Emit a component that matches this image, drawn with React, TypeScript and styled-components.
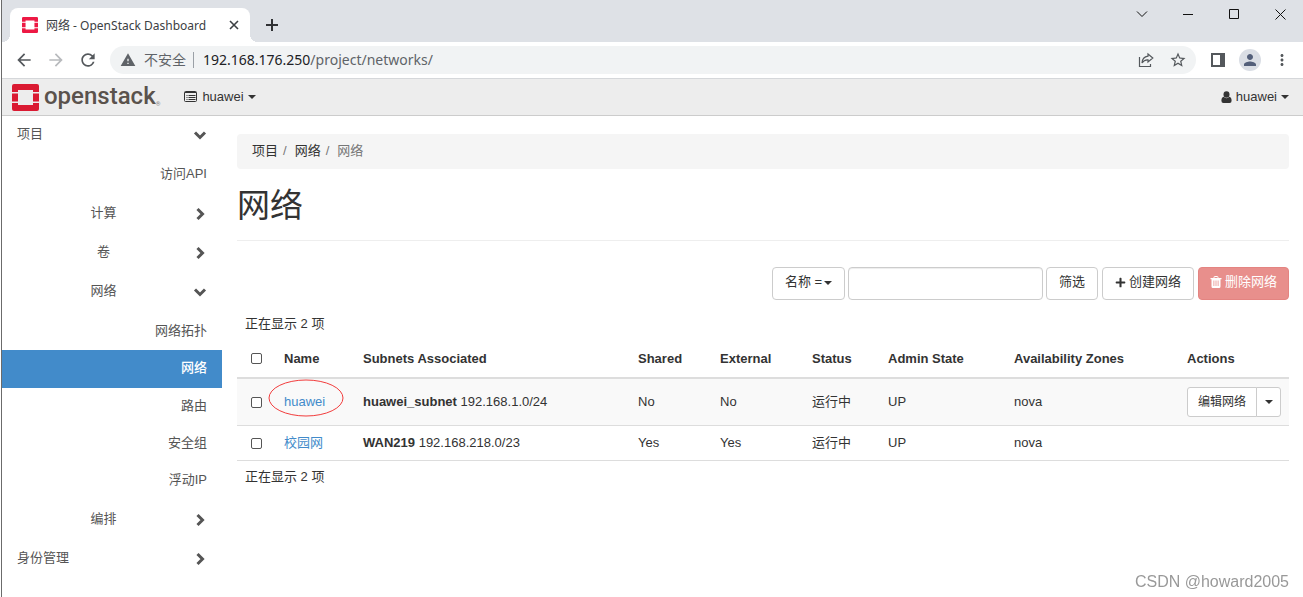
import React from "react";
import styled, { createGlobalStyle, css } from "styled-components";
import {
  MdArrowBack,
  MdArrowForward,
  MdRefresh,
  MdWarning,
  MdStarBorder,
  MdPerson,
  MdMoreVert,
} from "react-icons/md";
import { FaPlus } from "react-icons/fa";

const uiFont = `"Noto Sans", "Noto Sans CJK SC", sans-serif`;
const pageFont = `"Liberation Sans", "Noto Sans CJK SC", sans-serif`;

const GlobalStyle = createGlobalStyle`
  *, *::before, *::after { box-sizing: border-box; }
  body {
    margin: 0;
    background: #fff;
    color: #333;
    font: 13px/20px ${pageFont};
  }
  button, input, select { font: inherit; color: inherit; margin: 0; }
  a { color: inherit; text-decoration: none; }
  svg { display: block; flex: none; }
`;

const Window = styled.div`
  min-height: 100vh;
  margin-left: 1px;
  border-left: 1px solid #6b6b6b;
`;

/* ---------- browser chrome ---------- */

const TabStrip = styled.div`
  display: flex;
  align-items: flex-end;
  height: 42px;
  padding-left: 8px;
  background: #dee1e6;
`;

const Tab = styled.div`
  position: relative;
  display: flex;
  align-items: center;
  width: 240px;
  height: 34px;
  padding: 0 10px 0 12px;
  border-radius: 8px 8px 0 0;
  background: #fff;
  font: 12px/18px ${uiFont};
  color: #3c4043;

  &::before,
  &::after {
    content: "";
    position: absolute;
    bottom: 0;
    width: 8px;
    height: 8px;
  }
  &::before {
    right: 100%;
    background: radial-gradient(circle at 0 0, transparent 8px, #fff 8px);
  }
  &::after {
    left: 100%;
    background: radial-gradient(circle at 100% 0, transparent 8px, #fff 8px);
  }
`;

const TabTitle = styled.span`
  flex: 1;
  margin-left: 8px;
  padding-top: 2px;
  white-space: nowrap;
`;

const IconButton = styled.button<{ $size?: number }>`
  display: flex;
  align-items: center;
  justify-content: center;
  flex: none;
  width: ${(p) => p.$size ?? 32}px;
  height: ${(p) => p.$size ?? 32}px;
  padding: 0;
  border: 0;
  background: none;
  color: #54585c;
`;

const NewTab = styled(IconButton)`
  margin: 0 auto 1px 6px;
  color: #303134;
`;

const WindowControls = styled.div`
  display: flex;
  align-self: flex-start;
`;

const WindowButton = styled(IconButton)`
  width: 46px;
  height: 28px;
  color: #111;
`;

const Toolbar = styled.div`
  display: flex;
  align-items: center;
  height: 37px;
  padding: 0 5px 1px 6px;
  border-bottom: 1px solid #d5d7da;
`;

const Omnibox = styled.form`
  flex: 1;
  display: flex;
  align-items: center;
  height: 28px;
  margin: 0 6px;
  padding: 0 2px 0 10px;
  border-radius: 14px;
  background: #f1f3f4;
  color: #5f6368;
  font: 14px/20px ${uiFont};
`;

const Insecure = styled.span`
  margin: 0 7px 0 8px;
`;

const Address = styled.div`
  flex: 1;
  padding-left: 9px;
  border-left: 1px solid #9aa0a6;
  line-height: 16px;
  white-space: nowrap;

  b { font-weight: 400; color: #202124; }
`;

const Avatar = styled.span`
  display: flex;
  align-items: center;
  justify-content: center;
  width: 22px;
  height: 22px;
  border-radius: 50%;
  background: #dadee5;
  color: #535f7a;
`;

/* ---------- dashboard header ---------- */

const Header = styled.header`
  display: flex;
  align-items: center;
  justify-content: space-between;
  height: 37px;
  padding: 0 14px 0 10px;
  border-bottom: 1px solid #ccc;
  background: #ededed;
`;

const HeaderGroup = styled.div`
  display: flex;
  align-items: center;
`;

const Brand = styled.a`
  display: flex;
  align-items: center;
  gap: 5px;
  margin-right: 24px;
  color: #5a524c;
  font: 500 24px/30px Roboto, sans-serif;

  span { display: flex; align-items: flex-end; height: 30px; padding-bottom: 1px; }
  small { font-size: 6px; line-height: 14px; color: #888; }
`;

const NavButton = styled.button`
  display: flex;
  align-items: center;
  gap: 4px;
  padding: 0;
  border: 0;
  background: none;
`;

const Caret = styled.span`
  border: 4px solid transparent;
  border-top-color: currentColor;
  border-bottom: 0;
`;

/* ---------- sidebar ---------- */

const Body = styled.div`
  display: flex;
  align-items: flex-start;
`;

const Sidebar = styled.nav`
  flex: none;
  width: 220px;
  color: #555;
`;

const PanelRow = styled.button<{ $nested?: boolean }>`
  display: flex;
  align-items: center;
  width: 100%;
  height: 37px;
  margin-bottom: 2px;
  padding: 0 15px;
  border: 0;
  background: none;
  text-align: ${(p) => (p.$nested ? "center" : "left")};

  span { flex: 1; padding: 0 3px 2px 0; }
`;

const PanelList = styled.div`
  margin: 3px 0 2px;
`;

const PanelLink = styled.a<{ $active?: boolean }>`
  display: block;
  padding: 8px 15px 9px;
  text-align: right;
  ${(p) =>
    p.$active &&
    css`
      padding-bottom: 10px;
      background: #428bca;
      color: #fff;
      font-weight: 500;
    `}
`;

/* ---------- content ---------- */

const Content = styled.main`
  flex: 1;
  min-width: 0;
  padding: 18px 14px 0 15px;
`;

const Breadcrumb = styled.ol`
  display: flex;
  margin: 0;
  padding: 7px 15px 8px;
  border-radius: 4px;
  background: #f5f5f5;
  list-style: none;

  li + li::before { content: "/"; padding: 0 8px 0 5px; color: #777; }
  li:last-child { color: #777; }
`;

const Title = styled.h1`
  margin: 15px 0 26px;
  padding-bottom: 12px;
  border-bottom: 1px solid #eee;
  font: 400 33px/44px ${pageFont};
`;

const Actions = styled.div`
  display: flex;
  justify-content: flex-end;
  gap: 4px;
`;

const Filter = styled.form`
  display: flex;
  gap: 3px;
`;

const control = css`
  height: 33px;
  border: 1px solid #ccc;
  border-radius: 4px;
  background: #fff;
`;

const Button = styled.button<{ $danger?: boolean }>`
  ${control}
  display: flex;
  align-items: center;
  gap: 3px;
  padding: 0 12px 3px;
  white-space: nowrap;
  ${(p) =>
    p.$danger &&
    css`
      padding: 0 11px 3px;
      border-color: #e48481;
      background: #e88f8c;
      color: #fff;
    `}
`;

const SelectBox = styled.label`
  position: relative;
  display: block;

  ${Caret} {
    position: absolute;
    right: 13px;
    top: 14px;
    pointer-events: none;
  }
`;

const Select = styled.select`
  ${control}
  width: 73px;
  padding: 0 20px 3px 12px;
  appearance: none;
`;

const Input = styled.input`
  ${control}
  width: 195px;
  padding: 0 12px;
  box-shadow: inset 0 1px 1px rgba(0, 0, 0, 0.075);
`;

const Count = styled.div`
  padding: 0 8px;
`;

const CountTop = styled(Count)`
  margin: 14px 0 4px;
`;

const CountBottom = styled(Count)`
  margin-top: 6px;
`;

const Table = styled.table`
  width: 100%;
  border-collapse: separate;
  border-spacing: 0;
  table-layout: fixed;

  th, td { padding: 7px 8px; text-align: left; vertical-align: middle; white-space: nowrap; }
  th { height: 41px; padding-top: 9px; border-bottom: 2px solid #ddd; }
  td { border-bottom: 1px solid #ddd; }
  th:first-child, td:first-child { padding-left: 14px; }
  tbody tr:nth-child(odd) { background: #f9f9f9; }
`;

const Col = styled.col<{ $w?: number }>`
  width: ${(p) => (p.$w ? `${p.$w}px` : "auto")};
`;

const Checkbox = styled.input.attrs({ type: "checkbox" })`
  display: block;
  width: 11px;
  height: 11px;
  border: 1px solid #555;
  border-radius: 2px;
  background: #fff;
  appearance: none;
`;

const NameLink = styled.a`
  position: relative;
  color: #428bca;
`;

const Ring = styled.svg`
  position: absolute;
  left: -16px;
  top: -15px;
  pointer-events: none;
`;

const ButtonGroup = styled.div`
  display: flex;
  margin: 1px 0;
`;

const SmallButton = styled.button`
  display: flex;
  align-items: center;
  height: 30px;
  padding: 0 10px;
  border: 1px solid #ccc;
  border-radius: 3px 0 0 3px;
  background: #fff;
  font-size: 12px;

  & + & { width: 25px; margin-left: -1px; padding: 0; justify-content: center; border-radius: 0 3px 3px 0; }
`;

const Watermark = styled.div`
  position: fixed;
  right: 14px;
  bottom: 5px;
  color: #999;
  font: 16px/20px ${pageFont};
`;

const OpenStackMark = ({ size, color }: { size: number; color: string }) => (
  <svg width={size} height={size} viewBox="0 0 27 27" fill={color} aria-hidden="true">
    <path d="M2 0h23a2 2 0 0 1 2 2v6h-6V6H6v2H0V2a2 2 0 0 1 2-2z" />
    <path d="M0 19h6v2h15v-2h6v6a2 2 0 0 1-2 2H2a2 2 0 0 1-2-2z" />
    <path d="M0 9.500h6v8H0zM21 9.500h6v8h-6z" />
  </svg>
);

const ListIcon = () => (
  <svg width="14" height="14" viewBox="0 0 14 14" fill="none" stroke="#333" aria-hidden="true">
    <rect x="0.500" y="1.500" width="12" height="10" rx="1" />
    <path d="M1 2.500h11M2.500 5.500h1M2.500 7.500h1M2.500 9.500h1M4.500 5.500h7M4.500 7.500h7M4.500 9.500h7" />
  </svg>
);

const UserIcon = () => (
  <svg width="11" height="12" viewBox="0 0 11 12" fill="currentColor" aria-hidden="true">
    <ellipse cx="5.500" cy="3.500" rx="3" ry="3.300" />
    <path d="M2.700 5.800Q3.800 7.200 5.500 7.200T8.300 5.800Q10.600 6.300 10.600 9.800 10.600 12 8.600 12H2.400Q.4 12 .4 9.800.4 6.300 2.700 5.800z" />
  </svg>
);

const Chevron = ({ open }: { open?: boolean }) => (
  <svg width="14" height="14" fill="none" stroke="#555" strokeWidth="3" aria-hidden="true">
    <path d={open ? "M2 4.500l5 5 5-5" : "M4.500 2l5 5-5 5"} />
  </svg>
);

const TrashIcon = () => (
  <svg width="12" height="12" viewBox="0 0 11 12" aria-hidden="true">
    <path
      d="M3.500 2V1.200Q3.500.5 4.200.5h2.600q.7 0 .7.700V2"
      fill="none"
      stroke="currentColor"
    />
    <path
      fill="currentColor"
      fillRule="evenodd"
      d="M0 2h11v1.200H10V10.500Q10 12 8.600 12H2.400Q1 12 1 10.500V3.200H0zM3 4.500V10h.8V4.500zM5.100 4.500V10h.8V4.500zM7.200 4.500V10H8V4.500z"
    />
  </svg>
);

const columns = [
  { label: "Name", w: 79 },
  { label: "Subnets Associated" },
  { label: "Shared", w: 82 },
  { label: "External", w: 92 },
  { label: "Status", w: 76 },
  { label: "Admin State", w: 126 },
  { label: "Availability Zones", w: 173 },
  { label: "Actions", w: 110 },
];

const networks = [
  { name: "huawei", subnet: "huawei_subnet", cidr: "192.168.1.0/24", flag: "No", marked: true },
  { name: "校园网", subnet: "WAN219", cidr: "192.168.218.0/23", flag: "Yes", marked: false },
];

function Group({ label, open, nested }: { label: string; open?: boolean; nested?: boolean }) {
  return (
    <PanelRow type="button" $nested={nested} aria-expanded={!!open}>
      <span>{label}</span>
      <Chevron open={open} />
    </PanelRow>
  );
}

export default function App() {
  return (
    <Window>
      <GlobalStyle />
      <TabStrip>
        <Tab>
          <OpenStackMark size={16} color="#ed1944" />
          <TabTitle>网络 - OpenStack Dashboard</TabTitle>
          <IconButton $size={12} aria-label="关闭标签页">
            <svg width="10" height="10" fill="none" stroke="#3c4043" strokeWidth="1.600"><path d="M1 1l8 8M9 1L1 9" /></svg>
          </IconButton>
        </Tab>
        <NewTab aria-label="新标签页">
          <svg width="12" height="12" fill="none" stroke="currentColor" strokeWidth="2"><path d="M0 6h12M6 0v12" /></svg>
        </NewTab>
        <WindowControls>
          <WindowButton aria-label="搜索标签页">
            <svg width="12" height="12" fill="none" stroke="currentColor"><path d="M1 3.500l5 5 5-5" /></svg>
          </WindowButton>
          <WindowButton aria-label="最小化">
            <svg width="10" height="10" fill="none" stroke="currentColor"><path d="M0 5.500h10" /></svg>
          </WindowButton>
          <WindowButton aria-label="最大化">
            <svg width="10" height="10" fill="none" stroke="currentColor"><path d="M.5.500h9v9h-9z" /></svg>
          </WindowButton>
          <WindowButton aria-label="关闭">
            <svg width="11" height="11" fill="none" stroke="currentColor"><path d="M.5.500l10 10M10.500.500l-10 10" /></svg>
          </WindowButton>
        </WindowControls>
      </TabStrip>

      <Toolbar>
        <IconButton aria-label="后退"><MdArrowBack size={20} /></IconButton>
        <IconButton aria-label="前进"><MdArrowForward size={20} color="#b8babd" /></IconButton>
        <IconButton aria-label="重新加载"><MdRefresh size={20} /></IconButton>
        <Omnibox>
          <MdWarning size={16} />
          <Insecure>不安全</Insecure>
          <Address><b>192.168.176.250</b>/project/networks/</Address>
          <IconButton type="button" aria-label="分享">
            <svg width="16" height="16" viewBox="0 0 16 16" fill="none" stroke="currentColor" strokeWidth="1.200">
              <path d="M1.500 5v9.500h11V12" />
              <path d="M10 2l4.800 4L10 10V7.800C7.500 7.600 5.500 8.500 4 11c.2-3.800 2.500-6.300 6-6.800z" />
            </svg>
          </IconButton>
          <IconButton type="button" aria-label="收藏"><MdStarBorder size={18} /></IconButton>
        </Omnibox>
        <IconButton aria-label="侧边栏">
          <svg width="14" height="14" fill="none" stroke="currentColor">
            <path d="M1 1h12v12H1z" strokeWidth="2" />
            <path d="M11 1v12" strokeWidth="4" />
          </svg>
        </IconButton>
        <IconButton aria-label="个人资料"><Avatar><MdPerson size={18} /></Avatar></IconButton>
        <IconButton aria-label="菜单"><MdMoreVert size={18} /></IconButton>
      </Toolbar>

      <Header>
        <HeaderGroup>
          <Brand href="#">
            <OpenStackMark size={27} color="#da1a32" />
            <span>openstack<small>®</small></span>
          </Brand>
          <NavButton><ListIcon />huawei<Caret /></NavButton>
        </HeaderGroup>
        <NavButton><UserIcon />huawei<Caret /></NavButton>
      </Header>

      <Body>
        <Sidebar>
          <Group label="项目" open />
          <PanelList><PanelLink href="#">访问API</PanelLink></PanelList>
          <Group label="计算" nested />
          <Group label="卷" nested />
          <Group label="网络" nested open />
          <PanelList>
            <PanelLink href="#">网络拓扑</PanelLink>
            <PanelLink href="#" $active>网络</PanelLink>
            <PanelLink href="#">路由</PanelLink>
            <PanelLink href="#">安全组</PanelLink>
            <PanelLink href="#">浮动IP</PanelLink>
          </PanelList>
          <Group label="编排" nested />
          <Group label="身份管理" />
        </Sidebar>

        <Content>
          <Breadcrumb>
            <li><a href="#">项目</a></li>
            <li><a href="#">网络</a></li>
            <li>网络</li>
          </Breadcrumb>
          <Title>网络</Title>

          <Actions>
            <Filter>
              <SelectBox>
                <Select aria-label="筛选字段"><option>名称 =</option></Select>
                <Caret />
              </SelectBox>
              <Input aria-label="筛选值" />
              <Button type="button">筛选</Button>
            </Filter>
            <Button type="button"><FaPlus size={11} />创建网络</Button>
            <Button type="button" $danger><TrashIcon />删除网络</Button>
          </Actions>

          <CountTop>正在显示 2 项</CountTop>
          <Table>
            <colgroup>
              <Col $w={39} />
              {columns.map((c) => <Col key={c.label} $w={c.w} />)}
            </colgroup>
            <thead>
              <tr>
                <th><Checkbox aria-label="全选" /></th>
                {columns.map((c) => <th key={c.label}>{c.label}</th>)}
              </tr>
            </thead>
            <tbody>
              {networks.map((n) => (
                <tr key={n.name}>
                  <td><Checkbox aria-label={n.name} /></td>
                  <td>
                    <NameLink href="#">
                      {n.name}
                      {n.marked && (
                        <Ring width="76" height="38" fill="none" stroke="#f23c3c">
                          <ellipse cx="38" cy="19" rx="37" ry="18" />
                        </Ring>
                      )}
                    </NameLink>
                  </td>
                  <td><b>{n.subnet}</b> {n.cidr}</td>
                  <td>{n.flag}</td>
                  <td>{n.flag}</td>
                  <td>运行中</td>
                  <td>UP</td>
                  <td>nova</td>
                  <td>
                    {n.marked && (
                      <ButtonGroup>
                        <SmallButton type="button">编辑网络</SmallButton>
                        <SmallButton type="button" aria-label="更多操作"><Caret /></SmallButton>
                      </ButtonGroup>
                    )}
                  </td>
                </tr>
              ))}
            </tbody>
          </Table>
          <CountBottom>正在显示 2 项</CountBottom>
        </Content>
      </Body>
      <Watermark>CSDN @howard2005</Watermark>
    </Window>
  );
}
